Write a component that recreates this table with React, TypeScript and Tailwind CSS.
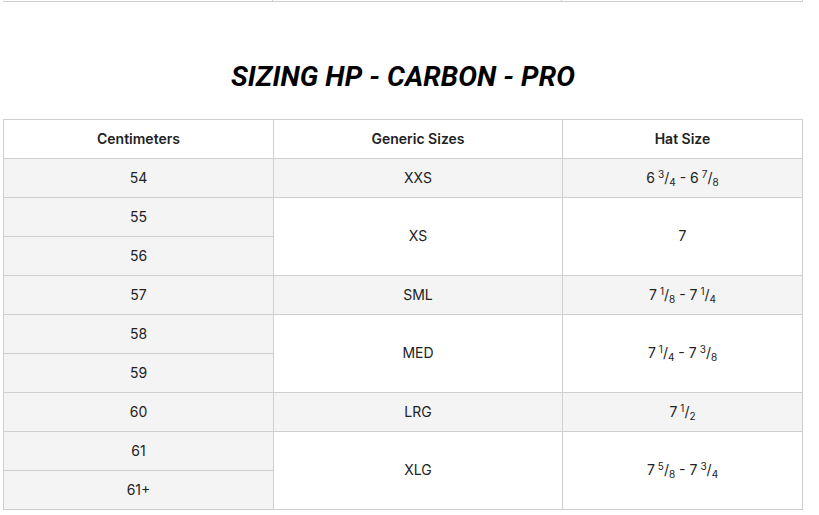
import React from "react";

const Frac = ({ w, n, d }: { w: string; n: string; d: string }) => (
  <span>
    {w}
    <span className="ml-[3px] text-[10px] relative top-[-5px]">{n}</span>
    <span>/</span>
    <span className="text-[10px] relative top-[3px]">{d}</span>
  </span>
);

const b = "border border-[#cfcfcf]";
const td = `${b} h-[39px] p-0 pb-[2px] text-center align-middle`;

export default function App() {
  return (
    <div className="w-[819px] h-[515px] bg-white overflow-hidden text-[#222]" style={{ fontFamily: "Inter, 'Noto Sans', sans-serif" }}>
      <div className="ml-[3px] w-[800px] flex h-[2px] border-b border-[#cfcfcf]">
        <div className="w-[270px] border-r border-[#cfcfcf]" />
        <div className="w-[289px] border-r border-[#cfcfcf]" />
        <div className="flex-1 border-r border-[#cfcfcf]" />
      </div>
      <div className="ml-[3px] w-[800px] pt-[58px] mb-[25px] text-center">
        <h2
          className="text-[28px] leading-[34px] font-bold italic text-black tracking-[0.1px]"
          style={{ fontFamily: "Roboto, 'Liberation Sans', sans-serif" }}
        >
          SIZING HP - CARBON - PRO
        </h2>
      </div>
      <table className="ml-[3px] w-[800px] border-collapse text-[14px] table-fixed">
        <colgroup>
          <col className="w-[270px]" />
          <col className="w-[289px]" />
          <col />
        </colgroup>
        <thead>
          <tr className="bg-white font-semibold">
            <td className={td}>Centimeters</td>
            <td className={td}>Generic Sizes</td>
            <td className={td}>Hat Size</td>
          </tr>
        </thead>
        <tbody>
          <tr className="bg-[#f4f4f4]">
            <td className={td}>54</td>
            <td className={td}>XXS</td>
            <td className={td}>
              <Frac w="6" n="3" d="4" /> - <Frac w="6" n="7" d="8" />
            </td>
          </tr>
          <tr>
            <td className={`${td} bg-[#f4f4f4]`}>55</td>
            <td className={`${td} bg-white`} rowSpan={2}>XS</td>
            <td className={`${td} bg-white`} rowSpan={2}>7</td>
          </tr>
          <tr>
            <td className={`${td} bg-[#f4f4f4]`}>56</td>
          </tr>
          <tr className="bg-[#f4f4f4]">
            <td className={td}>57</td>
            <td className={td}>SML</td>
            <td className={td}>
              <Frac w="7" n="1" d="8" /> - <Frac w="7" n="1" d="4" />
            </td>
          </tr>
          <tr>
            <td className={`${td} bg-[#f4f4f4]`}>58</td>
            <td className={`${td} bg-white`} rowSpan={2}>MED</td>
            <td className={`${td} bg-white`} rowSpan={2}>
              <Frac w="7" n="1" d="4" /> - <Frac w="7" n="3" d="8" />
            </td>
          </tr>
          <tr>
            <td className={`${td} bg-[#f4f4f4]`}>59</td>
          </tr>
          <tr className="bg-[#f4f4f4]">
            <td className={td}>60</td>
            <td className={td}>LRG</td>
            <td className={td}>
              <Frac w="7" n="1" d="2" />
            </td>
          </tr>
          <tr>
            <td className={`${td} bg-[#f4f4f4]`}>61</td>
            <td className={`${td} bg-white`} rowSpan={2}>XLG</td>
            <td className={`${td} bg-white`} rowSpan={2}>
              <Frac w="7" n="5" d="8" /> - <Frac w="7" n="3" d="4" />
            </td>
          </tr>
          <tr>
            <td className={`${td} bg-[#f4f4f4]`}>61+</td>
          </tr>
        </tbody>
      </table>
    </div>
  );
}
